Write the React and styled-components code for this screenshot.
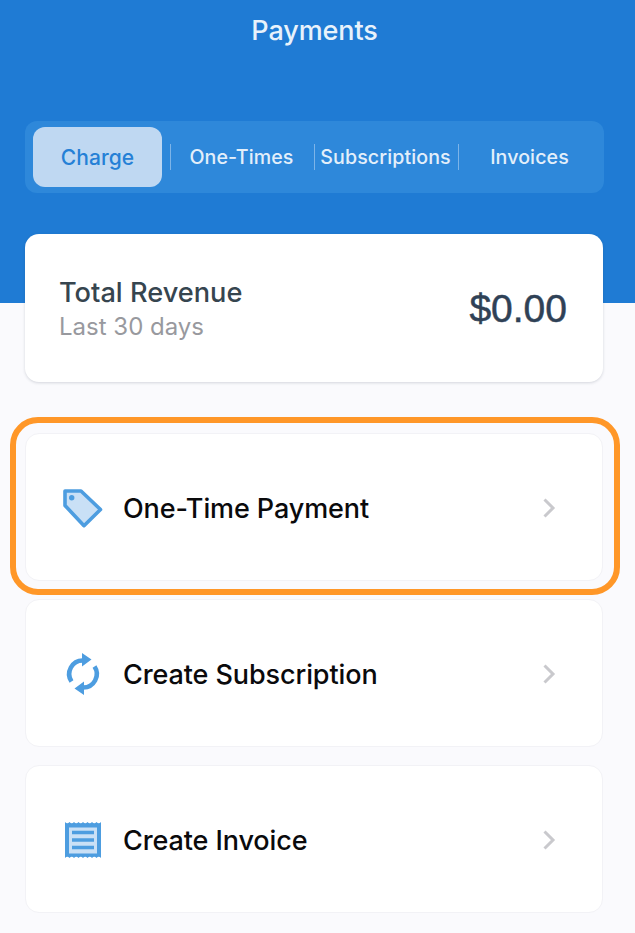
import styled, { createGlobalStyle } from "styled-components";

const GlobalStyle = createGlobalStyle`
  html, body { margin: 0; padding: 0; background: #fafafd; }
  body { font-family: Inter, "Noto Sans", "Liberation Sans", sans-serif; overflow: hidden; }
`;

const Page = styled.div`
  width: 635px;
  height: 933px;
  overflow: hidden;
`;

const Header = styled.header`
  height: 303px;
  box-sizing: border-box;
  background: #1f7bd4;
  padding: 14px 31px 0 25px;
`;

const Title = styled.h1`
  margin: 0;
  text-align: center;
  font-size: 27px;
  line-height: 34px;
  font-weight: 500;
  letter-spacing: -0.1px;
  color: #e8f2fb;
`;

const Tabs = styled.nav`
  margin-top: 73px;
  height: 72px;
  box-sizing: border-box;
  padding: 6px 8px;
  border-radius: 12px;
  background: #2e88da;
  display: grid;
  grid-template-columns: repeat(4, 129px);
  column-gap: 15px;
`;

const Tab = styled.div`
  position: relative;
  display: flex;
  align-items: center;
  justify-content: center;
  border-radius: 12px;
  font-size: ${(p) => (p.$active ? "21px" : "19.6px")};
  font-weight: 500;
  white-space: nowrap;
  letter-spacing: 0.1px;
  background: ${(p) => (p.$active ? "#bfd8f2" : "transparent")};
  color: ${(p) => (p.$active ? "#2580d6" : "#e3effa")};

  &:not(:last-child)::after {
    content: "";
    position: absolute;
    right: -9px;
    top: 17px;
    width: 1px;
    height: 26px;
    background: #7db4e8;
  }
`;

const Main = styled.main`
  margin-top: -69px;
  padding: 0 32px 0 25px;
  display: flex;
  flex-direction: column;
`;

const RevenueCard = styled.section`
  height: 148px;
  box-sizing: border-box;
  padding: 2px 36px 0 34px;
  background: #fff;
  border-radius: 14px;
  box-shadow: 0 1px 3px rgba(40, 50, 70, 0.18);
  display: flex;
  align-items: center;
  justify-content: space-between;
`;

const RevenueLabel = styled.div`
  font-size: 27.2px;
  line-height: 32px;
  font-weight: 500;
  color: #36454f;
`;

const RevenueSub = styled.div`
  margin-top: 3px;
  font-size: 24px;
  line-height: 30px;
  color: #98999e;
`;

const Amount = styled.div`
  font-family: "Liberation Sans", Arial, sans-serif;
  font-size: 39px;
  -webkit-text-stroke: 0.5px #2f4156;
  color: #2f4156;
`;

const ActionList = styled.div`
  margin-top: 51px;
  display: flex;
  flex-direction: column;
  gap: 18px;
`;

const ActionCard = styled.div`
  position: relative;
  height: 148px;
  box-sizing: border-box;
  padding: 2px 46px 0 36px;
  background: #fff;
  border: 1px solid #f2f2f6;
  border-radius: 14px;
  display: flex;
  align-items: center;
  gap: 19px;
`;

const Highlight = styled.div`
  position: absolute;
  inset: -17px -18px -15px -16px;
  border: 6px solid #ff9728;
  border-radius: 28px;
  pointer-events: none;
`;

const IconSlot = styled.div`
  width: 42px;
  height: 42px;
  flex: none;
`;

const ActionLabel = styled.div`
  flex: 1;
  font-size: 27px;
  font-weight: 500;
  letter-spacing: -0.1px;
  color: #0a0a0c;
`;

const TagIcon = () => (
  <svg width="42" height="42" viewBox="0 0 42 42">
    <path
      d="M3 4 H19 L38.5 22.5 L22 38.7 L3 18.5 Z"
      fill="#c9e0f6"
      stroke="#4d9de0"
      strokeWidth="3.6"
      strokeLinejoin="round"
    />
    <circle cx="9.7" cy="10.8" r="2.7" fill="#4d9de0" />
  </svg>
);

const SyncIcon = () => (
  <svg width="42" height="42" viewBox="0 0 42 42">
    <path d="M9.5 28.5 A13.5 13.5 0 0 1 21 7.5" fill="none" stroke="#4d9de0" strokeWidth="4.6" />
    <path d="M32.5 13.5 A13.5 13.5 0 0 1 21 34.5" fill="none" stroke="#4d9de0" strokeWidth="4.6" />
    <path d="M20 0 L29.5 6.5 L20 13.5 Z M22 28.5 L12.5 35.5 L22 42 Z" fill="#4d9de0" />
  </svg>
);

// zigzag edge of the receipt, eight scallops across the 36px width
const scallops = (dir, depth) =>
  Array.from({ length: 8 }, () => `q${dir * 2.25} ${depth} ${dir * 4.5} 0`).join(" ");

const ReceiptIcon = () => (
  <svg width="42" height="42" viewBox="0 0 42 42">
    <path
      d={`M3 3 ${scallops(1, 2.5)} V39 ${scallops(-1, -2.5)} Z`}
      fill="#4d9de0"
    />
    <rect x="7" y="8.5" width="28" height="26" fill="#c9e0f6" />
    <path d="M10 13.5 H32 M10 21 H32 M10 28.5 H32" stroke="#4d9de0" strokeWidth="3.6" />
  </svg>
);

const Chevron = () => (
  <svg width="14" height="22" viewBox="0 0 14 22">
    <path d="M2.5 2.5 L11 11 L2.5 19.5" fill="none" stroke="#c9c9cd" strokeWidth="3" />
  </svg>
);

const tabs = ["Charge", "One-Times", "Subscriptions", "Invoices"];

const actions = [
  { label: "One-Time Payment", Icon: TagIcon, highlighted: true },
  { label: "Create Subscription", Icon: SyncIcon },
  { label: "Create Invoice", Icon: ReceiptIcon },
];

export default function App() {
  return (
    <Page>
      <GlobalStyle />
      <Header>
        <Title>Payments</Title>
        <Tabs>
          {tabs.map((t, i) => (
            <Tab key={t} $active={i === 0}>
              {t}
            </Tab>
          ))}
        </Tabs>
      </Header>
      <Main>
        <RevenueCard>
          <div>
            <RevenueLabel>Total Revenue</RevenueLabel>
            <RevenueSub>Last 30 days</RevenueSub>
          </div>
          <Amount>$0.00</Amount>
        </RevenueCard>
        <ActionList>
          {actions.map(({ label, Icon, highlighted }) => (
            <ActionCard key={label}>
              {highlighted && <Highlight />}
              <IconSlot>
                <Icon />
              </IconSlot>
              <ActionLabel>{label}</ActionLabel>
              <Chevron />
            </ActionCard>
          ))}
        </ActionList>
      </Main>
    </Page>
  );
}
